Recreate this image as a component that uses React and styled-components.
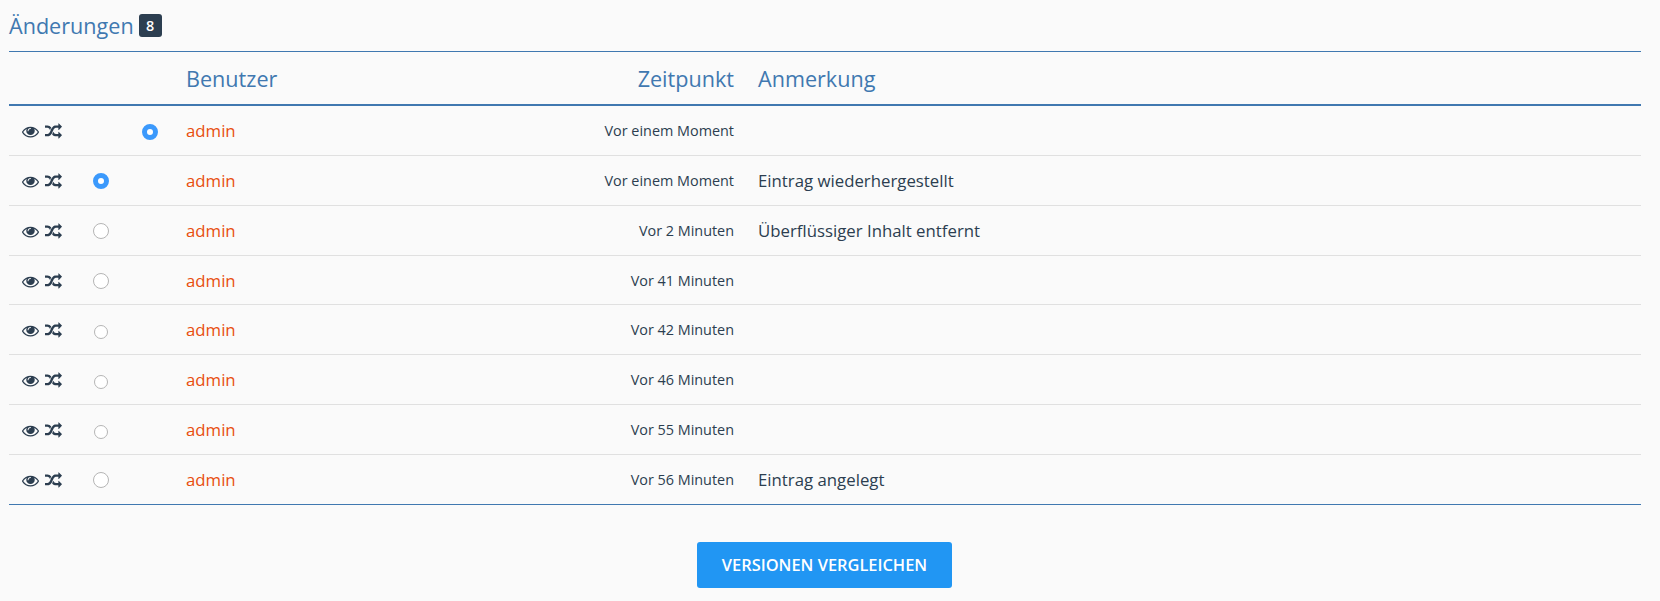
import React from "react";
import styled, { createGlobalStyle } from "styled-components";

const GlobalStyle = createGlobalStyle`
  html, body {
    margin: 0;
    background: #fafafa;
    font-family: "Open Sans", "Liberation Sans", sans-serif;
    color: #2c3e50;
  }
`;

const Page = styled.div`
  padding: 14px 19px 14px 9px;
`;

const Heading = styled.h3`
  display: flex;
  align-items: center;
  gap: 5px;
  height: 23px;
  margin: 0 0 14px;
  font-size: 21.6px;
  font-weight: 400;
  color: #4078b0;
`;

const Badge = styled.span`
  display: inline-flex;
  align-items: center;
  justify-content: center;
  width: 23px;
  height: 23px;
  border-radius: 3px;
  background: #2c3e50;
  color: #fff;
  font-size: 14.4px;
  font-weight: 600;
`;

const Table = styled.table`
  width: 100%;
  border-collapse: collapse;
  table-layout: fixed;
  border-top: 1px solid #4078b0;
  border-bottom: 1px solid #4078b0;
`;

const HeadCell = styled.th`
  height: 52px;
  padding: 0 0 0 ${(p) => p.$pad || "0"};
  border-bottom: 2px solid #4078b0;
  font-size: 21.6px;
  font-weight: 400;
  color: #4078b0;
  text-align: ${(p) => (p.$right ? "right" : "left")};
`;

const Row = styled.tr`
  height: 49.8px;
  &:first-child {
    height: 50.6px;
  }
  & + & td {
    border-top: 1px solid #e0e0e0;
  }
`;

const Cell = styled.td`
  padding: 0;
`;

const IconCell = styled(Cell)`
  padding: 2px 0 0 13px;
  line-height: 0;
  white-space: nowrap;
`;

const Icon = styled.svg`
  width: 17px;
  height: 17px;
  fill: #2c3e50;
  & + & {
    margin-left: 6px;
  }
`;

const RadioCell = styled(Cell)`
  padding-top: 2px;
  text-align: center;
  line-height: 0;
`;

const Radio = styled.span`
  display: inline-block;
  box-sizing: border-box;
  width: ${(p) => p.$size}px;
  height: ${(p) => p.$size}px;
  border-radius: 50%;
  background: #fff;
  border: ${(p) => (p.$on ? "5px solid #3b99fc" : "1px solid #b5b5b5")};
  margin-top: ${(p) => (p.$size === 14 ? 3 : 0)}px;
`;

const User = styled(Cell)`
  padding-left: 11px;
  font-size: 16.8px;
  color: #e84e0f;
`;

const Time = styled(Cell)`
  font-size: 14.4px;
  text-align: right;
`;

const Note = styled(Cell)`
  padding-left: 24px;
  font-size: 16.8px;
`;

const Actions = styled.div`
  display: flex;
  justify-content: center;
  margin-top: 37px;
  padding-right: 1px;
`;

const Button = styled.button`
  width: 255px;
  height: 46px;
  border: 0;
  border-radius: 3px;
  background: #2196f3;
  color: #fff;
  font-family: inherit;
  font-size: 16.4px;
  font-weight: 600;
`;

const EyeIcon = () => (
  <Icon viewBox="0 0 1792 1792">
    <path d="M1664 960q-152-236-381-355 61 104 61 223 0 185-131.5 316.5t-316.5 131.5-316.5-131.5-131.5-316.5q0-119 61-223-229 119-381 355 133 205 333.5 326.5t434.5 121.5 434.5-121.5 333.5-326.5zm-720-384q0-20-14-34t-34-14q-125 0-214.5 89.5t-89.5 214.5q0 20 14 34t34 14 34-14 14-34q0-86 61-147t147-61q20 0 34-14t14-34zm848 384q0 34-20 69-140 230-376.5 368.5t-499.5 138.5-499.5-139-376.5-368q-20-35-20-69t20-69q140-229 376.5-368t499.5-139 499.5 139 376.5 368q20 35 20 69z" />
  </Icon>
);

const RandomIcon = () => (
  <Icon viewBox="0 0 1792 1792">
    <path d="M666 481q-60 92-137 273-22-45-37-72.5t-40.5-63.5-51-56.5-63-35-81.5-14.5h-224q-14 0-23-9t-9-23v-192q0-14 9-23t23-9h224q250 0 410 225zm1126 799q0 14-9 23l-320 320q-9 9-23 9-13 0-22.5-9.5t-9.5-22.5v-192q-32 0-85 .5t-81 1-73-1-71-5-64-10.5-63-18.5-58-28.5-59-40-55-53.5-56-69.5q59-93 136-273 22 45 37 72.5t40.5 63.5 51 56.5 63 35 81.5 14.5h256v-192q0-14 9-23t23-9q12 0 24 10l319 319q9 9 9 23zm0-896q0 14-9 23l-320 320q-9 9-23 9-13 0-22.5-9.5t-9.5-22.5v-192h-256q-48 0-87 15t-69 45-51 61.5-45 77.5q-32 62-78 171-29 66-49.5 111t-54 105-64 100-74 83-90 68.5-106.5 42-128 16.5h-224q-14 0-23-9t-9-23v-192q0-14 9-23t23-9h224q48 0 87-15t69-45 51-61.5 45-77.5q32-62 78-171 29-66 49.5-111t54-105 64-100 74-83 90-68.5 106.5-42 128-16.5h256v-192q0-14 9-23t23-9q12 0 24 10l319 319q9 9 9 23z" />
  </Icon>
);

const rows = [
  { time: "Vor einem Moment", note: "", second: true, size: 16 },
  { time: "Vor einem Moment", note: "Eintrag wiederhergestellt", first: true, size: 16 },
  { time: "Vor 2 Minuten", note: "Überflüssiger Inhalt entfernt", size: 16 },
  { time: "Vor 41 Minuten", note: "", size: 16 },
  { time: "Vor 42 Minuten", note: "", size: 14 },
  { time: "Vor 46 Minuten", note: "", size: 14 },
  { time: "Vor 55 Minuten", note: "", size: 14 },
  { time: "Vor 56 Minuten", note: "Eintrag angelegt", size: 16 },
];

export default function App() {
  return (
    <Page>
      <GlobalStyle />
      <Heading>
        Änderungen <Badge>8</Badge>
      </Heading>
      <Table>
        <colgroup>
          <col width="68" />
          <col width="48" />
          <col width="50" />
          <col width="291" />
          <col width="268" />
          <col />
        </colgroup>
        <thead>
          <tr>
            <HeadCell />
            <HeadCell />
            <HeadCell />
            <HeadCell $pad="11px">Benutzer</HeadCell>
            <HeadCell $right>Zeitpunkt</HeadCell>
            <HeadCell $pad="24px">Anmerkung</HeadCell>
          </tr>
        </thead>
        <tbody>
          {rows.map((row, i) => (
            <Row key={i}>
              <IconCell>
                <EyeIcon />
                <RandomIcon />
              </IconCell>
              <RadioCell>
                {!row.second && <Radio $on={row.first} $size={row.size} />}
              </RadioCell>
              <RadioCell>{row.second && <Radio $on $size={row.size} />}</RadioCell>
              <User>admin</User>
              <Time>{row.time}</Time>
              <Note>{row.note}</Note>
            </Row>
          ))}
        </tbody>
      </Table>
      <Actions>
        <Button>VERSIONEN VERGLEICHEN</Button>
      </Actions>
    </Page>
  );
}
